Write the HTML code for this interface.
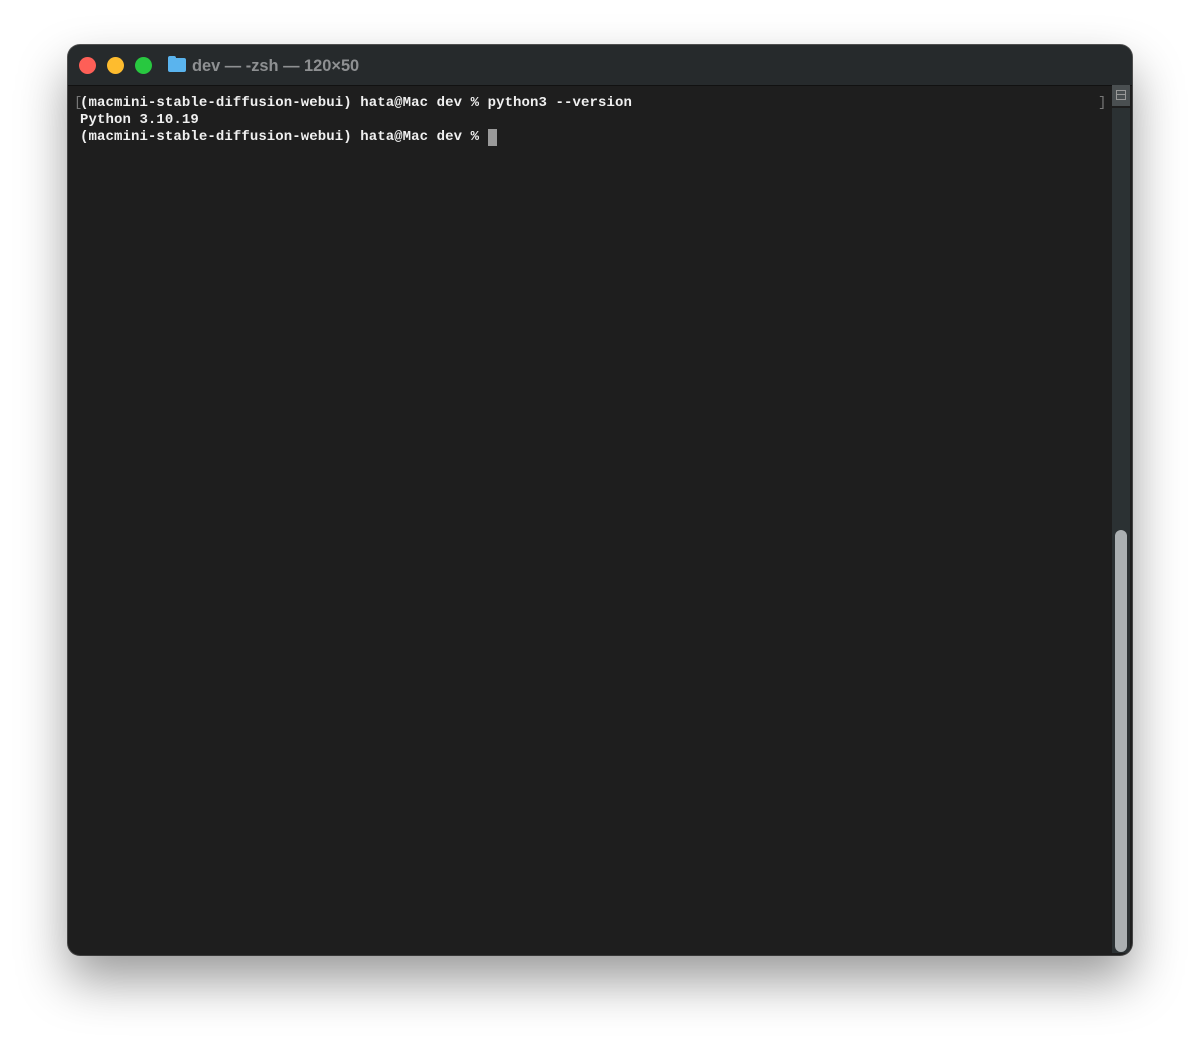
<!DOCTYPE html>
<html><head><style>
html,body{margin:0;padding:0;width:1200px;height:1045px;background:#fff;overflow:hidden}
.win{position:absolute;left:68px;top:45px;width:1064px;height:910px;border-radius:12px;background:#1e1e1e;overflow:hidden;box-shadow:0 25px 50px rgba(0,0,0,.4),0 0 0 1px #555;}
.title{position:absolute;left:0;top:0;width:100%;height:40px;background:#262a2c;border-bottom:1px solid #111}
.dot{position:absolute;top:12px;width:17px;height:17px;border-radius:50%}
.ttl{position:absolute;left:124px;top:12px;font:bold 16.4px "Liberation Sans",sans-serif;color:#8e9092}
.folder{position:absolute;left:100px;top:13px;width:18px;height:14px;background:#5ab4ee;border-radius:2px}
.folder:before{content:"";position:absolute;left:0;top:-2px;width:8px;height:4px;background:#5ab4ee;border-radius:2px 2px 0 0}
.term{position:absolute;left:12px;top:50px;font:bold 14px "Liberation Mono",monospace;letter-spacing:0.09px;line-height:17px;color:#f0f0f0;white-space:pre}
.cur{display:inline-block;width:9px;height:17px;background:#9a9a9a;vertical-align:top}
.track{position:absolute;left:1044px;top:63px;width:18px;height:845px;background:#2b3133}
.btn{position:absolute;left:1044px;top:40px;width:18px;height:21px;background:#4a4f51}
.btn i{position:absolute;left:4px;top:5px;width:8px;height:8px;border:1px solid #999}
.btn i:after{content:"";position:absolute;left:0;top:3px;width:8px;height:1px;background:#999}
.thumb{position:absolute;left:1047px;top:485px;width:12px;height:422px;border-radius:6px;background:#abb0b2}
</style></head><body>
<div class="win">
<div class="title">
<div class="dot" style="left:11px;background:#fe5f57"></div>
<div class="dot" style="left:39px;background:#febc2e"></div>
<div class="dot" style="left:67px;background:#28c840"></div>
<div class="folder"></div>
<div class="ttl">dev — -zsh — 120×50</div>
</div>
<div class="term">(macmini-stable-diffusion-webui) hata@Mac dev % python3 --version
Python 3.10.19
(macmini-stable-diffusion-webui) hata@Mac dev % <span class="cur"></span></div>
<div style="position:absolute;left:6px;top:50px;color:#777;font:14px 'Liberation Mono',monospace">[</div>
<div style="position:absolute;left:1030px;top:50px;color:#777;font:14px 'Liberation Mono',monospace">]</div>
<div class="btn"><i></i></div>
<div class="track"></div>
<div class="thumb"></div>
</div>
</body></html>
